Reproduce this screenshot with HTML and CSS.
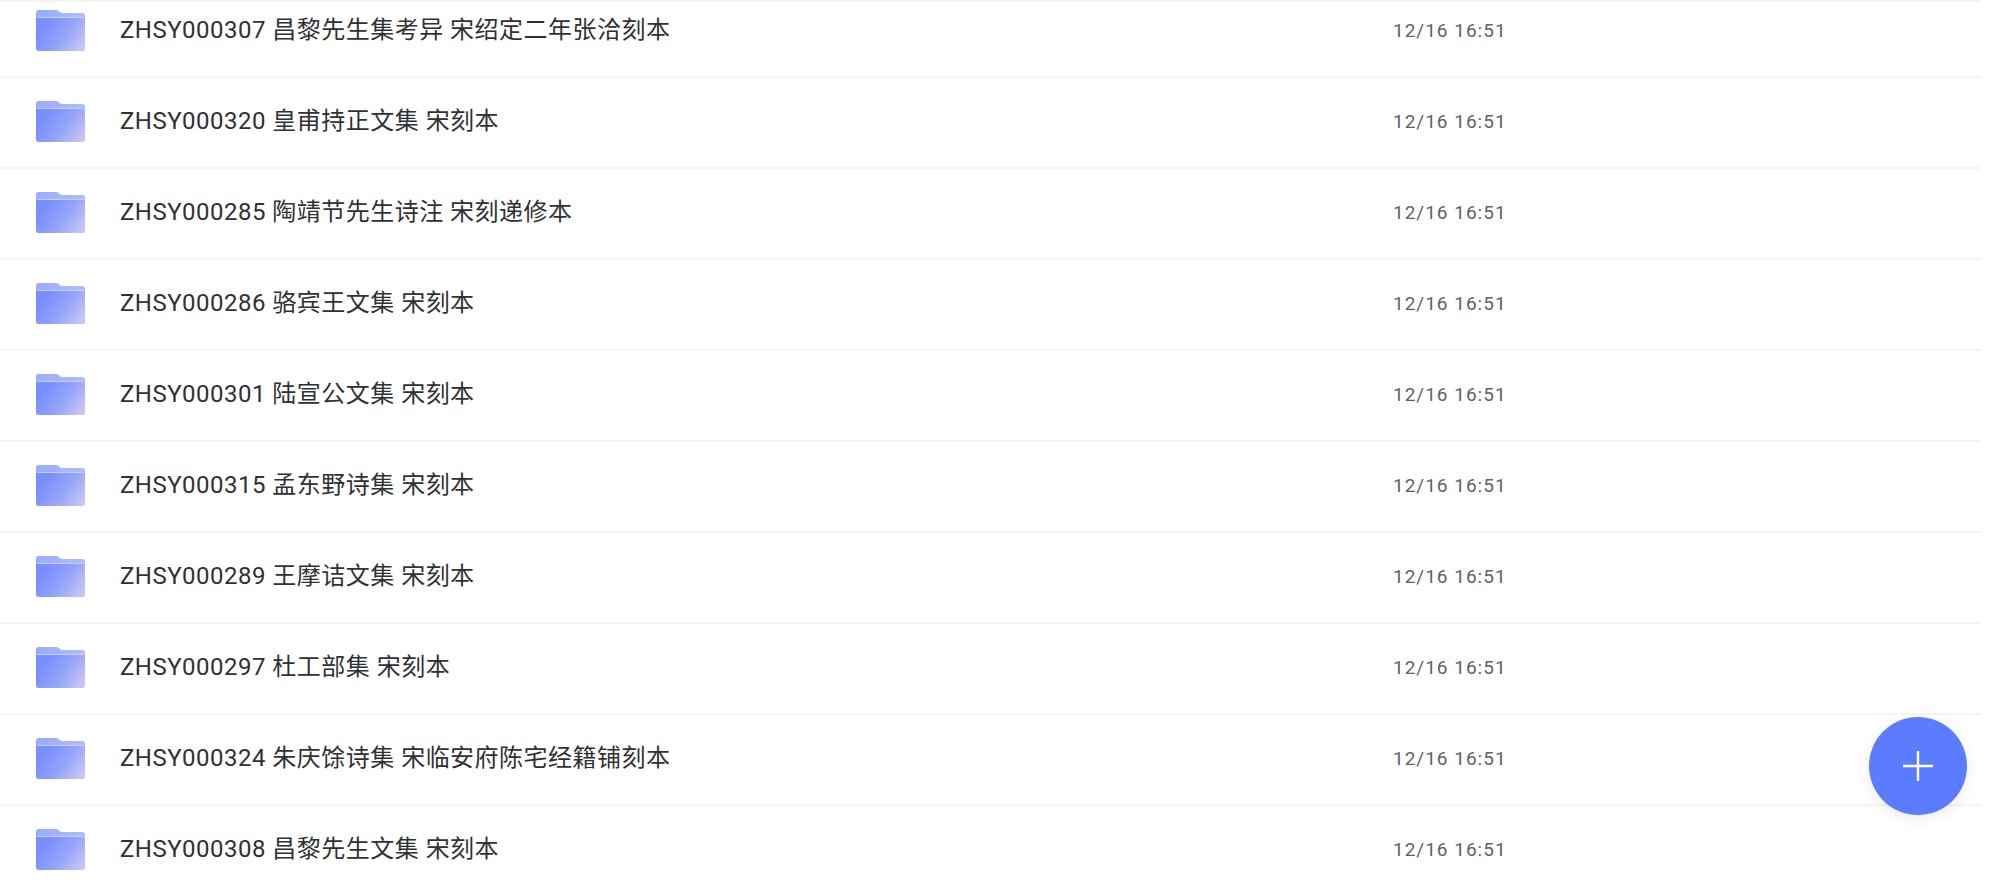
FILE: index.html
```html
<!DOCTYPE html>
<html lang="zh">
<head>
<meta charset="utf-8">
<title>文件列表</title>
<link rel="stylesheet" href="styles.css">
</head>
<body>
<svg class="defs" width="0" height="0" aria-hidden="true">
  <defs>
    <linearGradient id="back" x1="0" y1="0" x2="1" y2="0">
      <stop offset="0" stop-color="#98acff"/><stop offset="1" stop-color="#b0bdfc"/>
    </linearGradient>
    <linearGradient id="front" x1="0.1" y1="0.35" x2="1" y2="0.8">
      <stop offset="0" stop-color="#788eff"/><stop offset="0.5" stop-color="#93a3f9"/><stop offset="1" stop-color="#c8c5f2"/>
    </linearGradient>
    <symbol id="folder" viewBox="0 0 49 41">
      <path d="M2.500 0H20q1.400 0 2.400.8L25 3h21.500A2.500 2.500 0 0 1 49 5.500V12H0V2.500A2.500 2.500 0 0 1 2.500 0z" fill="url(#back)"/>
      <path d="M0 8.500Q0 7 2 7h45q2 0 2 1.500v30A2.500 2.500 0 0 1 46.500 41h-44A2.500 2.500 0 0 1 0 38.500z" fill="url(#front)"/>
      <path d="M1 7.500h47" stroke="#c6d0fd" stroke-width="1" fill="none"/>
    </symbol>
  </defs>
</svg>
<main class="page">
  <div class="topline"></div>
  <ul class="list">
    <li class="row"><svg class="folder"><use href="#folder"/></svg><span class="name">ZHSY000307 昌黎先生集考异 宋绍定二年张洽刻本</span><span class="date">12/16 16:51</span></li>
    <li class="row"><svg class="folder"><use href="#folder"/></svg><span class="name">ZHSY000320 皇甫持正文集 宋刻本</span><span class="date">12/16 16:51</span></li>
    <li class="row"><svg class="folder"><use href="#folder"/></svg><span class="name">ZHSY000285 陶靖节先生诗注 宋刻递修本</span><span class="date">12/16 16:51</span></li>
    <li class="row"><svg class="folder"><use href="#folder"/></svg><span class="name">ZHSY000286 骆宾王文集 宋刻本</span><span class="date">12/16 16:51</span></li>
    <li class="row"><svg class="folder"><use href="#folder"/></svg><span class="name">ZHSY000301 陆宣公文集 宋刻本</span><span class="date">12/16 16:51</span></li>
    <li class="row"><svg class="folder"><use href="#folder"/></svg><span class="name">ZHSY000315 孟东野诗集 宋刻本</span><span class="date">12/16 16:51</span></li>
    <li class="row"><svg class="folder"><use href="#folder"/></svg><span class="name">ZHSY000289 王摩诘文集 宋刻本</span><span class="date">12/16 16:51</span></li>
    <li class="row"><svg class="folder"><use href="#folder"/></svg><span class="name">ZHSY000297 杜工部集 宋刻本</span><span class="date">12/16 16:51</span></li>
    <li class="row"><svg class="folder"><use href="#folder"/></svg><span class="name">ZHSY000324 朱庆馀诗集 宋临安府陈宅经籍铺刻本</span><span class="date">12/16 16:51</span></li>
    <li class="row"><svg class="folder"><use href="#folder"/></svg><span class="name">ZHSY000308 昌黎先生文集 宋刻本</span><span class="date">12/16 16:51</span></li>
  </ul>
</main>
<button class="fab" aria-label="新建">
  <svg width="30" height="30" viewBox="0 0 30 30"><path d="M15 0v30M0 15h30" stroke="#fff" stroke-width="2.400" fill="none"/></svg>
</button>
</body>
</html>
```

FILE: styles.css
```css
* { box-sizing: border-box; }
html, body {
  margin: 0;
  height: 100%;
  overflow: hidden;
  background: #fff;
}
body {
  font-family: Roboto, "Noto Sans CJK SC", sans-serif;
  color: #303133;
}
.defs { position: absolute; }
.page {
  width: 1981px;
  height: 885px;
  overflow: hidden;
}
.topline {
  height: 2px;
  background: #f4f4f5;
  position: relative;
  z-index: 1;
}
.list {
  list-style: none;
  margin: -15px 0 0;
  padding: 0;
}
.row {
  display: flex;
  align-items: center;
  height: 91px;
  padding-left: 36px;
  border-bottom: 2px solid #f4f4f5;
}
.folder {
  width: 49px;
  height: 41px;
  flex: none;
  margin: 0 35px 3px 0;
}
.name {
  width: 1273px;
  flex: none;
  padding-bottom: 8px;
  font-size: 24px;
  font-weight: 400;
  letter-spacing: 0.48px;
  color: #303133;
  white-space: nowrap;
}
.date {
  padding-bottom: 2px;
  font-size: 19px;
  letter-spacing: 1px;
  color: #606266;
  white-space: nowrap;
}
.fab {
  position: fixed;
  left: 1869px;
  top: 717px;
  width: 98px;
  height: 98px;
  padding: 0;
  border: 0;
  border-radius: 50%;
  background: #5c7cff;
  box-shadow: 0 4px 14px rgba(0, 0, 0, 0.08);
  display: flex;
  align-items: center;
  justify-content: center;
}
```
